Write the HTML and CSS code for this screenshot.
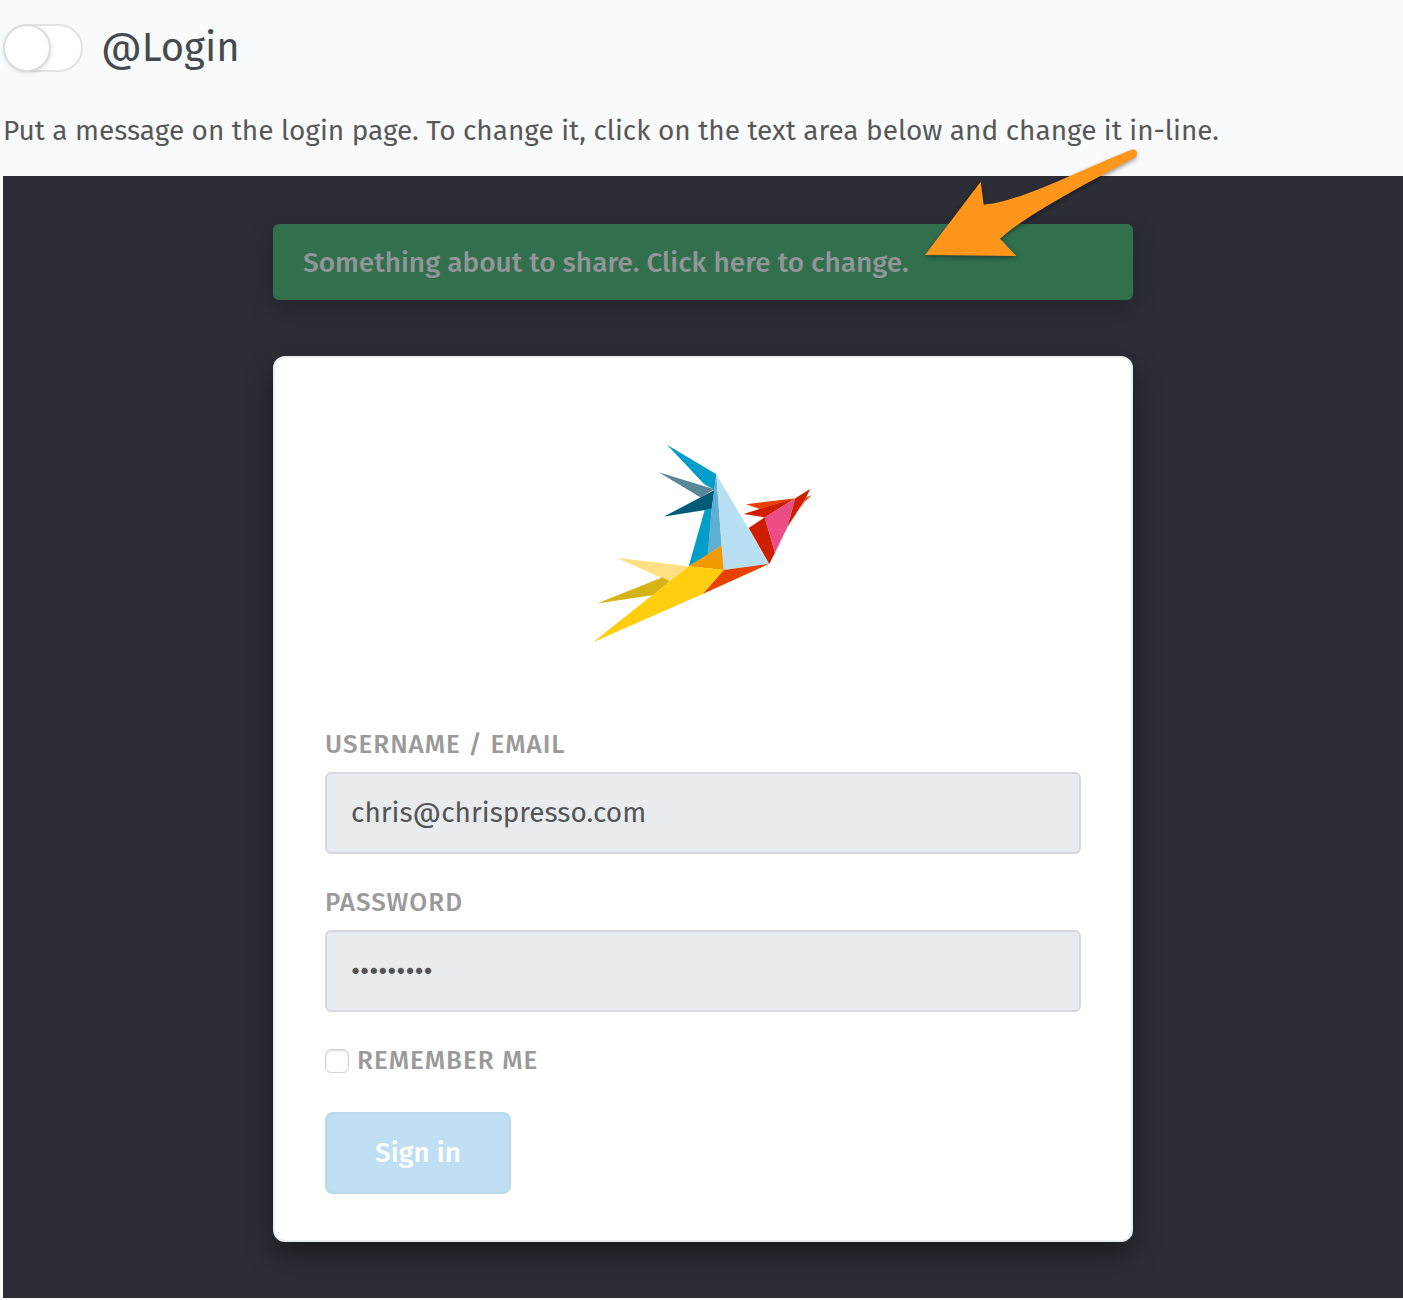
FILE: index.html
```html
<!DOCTYPE html>
<html lang="en">
<head>
<meta charset="utf-8">
<meta name="viewport" content="width=device-width, initial-scale=1">
<title>Login message</title>
<link rel="stylesheet" href="styles.css">
</head>
<body>
<main class="setting">
  <label class="setting-head">
    <input class="switch" type="checkbox" role="switch">
    <span class="setting-title">@Login</span>
  </label>
  <p class="setting-help">Put a message on the login page. To change it, click on the text area below and change it in-line.</p>

  <section class="preview" aria-label="Login page preview">
    <div class="banner">
      <span class="banner-text">Something about to share. Click here to change.</span>
      <svg class="arrow" viewBox="920 145 220 120" aria-hidden="true">
        <path fill="#ff951a" d="M925 255 L980.7 181.7 L983.7 204.7 C1020 202 1080 170 1132 149.5 Q1136.500 149 1137 153 Q1137 156 1134.500 157.500 C1090 182 1030 212 1000 238.700 L1016.300 256 Z"/>
      </svg>
    </div>

    <form class="card">
      <svg class="logo" viewBox="593 444 220 200" role="img" aria-label="Bird logo">
        <polygon fill="#009ec9" points="667,444.7 716.3,474.3 714.3,490 704,484"/>
        <polygon fill="#5a8796" points="658.7,472.3 714.3,489.3 700.7,497.5"/>
        <polygon fill="#005a78" points="664,516.5 700.7,497.3 714.5,490 711.7,509"/>
        <polygon fill="#009ec9" points="704.7,510 711.8,508.7 708,554.5 688.7,566.3"/>
        <polygon fill="#5eafd2" points="716.3,474.3 721.7,545.5 707.5,554.5 711.7,508.7 714.3,489.3"/>
        <polygon fill="#b8dff2" points="716.3,474.3 769.3,563.7 723.7,570 721.5,545.5"/>
        <polygon fill="#f39a00" points="721.6,545.5 688.7,566.3 723.7,570"/>
        <polygon fill="#e84000" points="723.7,570 769.5,563.7 702.7,594"/>
        <polygon fill="#ffe083" points="617.3,558 688.7,566.3 669.5,581.5"/>
        <polygon fill="#d5b416" points="597,603.4 662.5,577.3 669.5,581.3 653.7,595"/>
        <polygon fill="#ffce0f" points="688.7,566.3 723.7,570 702.7,594 593,642.3 653.7,594"/>
        <polygon fill="#e84000" points="746,504.3 795.3,498.3 760,508.9"/>
        <polygon fill="#cd1f00" points="743.7,514 760,508.7 795.3,498.3 764.7,517.4"/>
        <polygon fill="#cd1f00" points="748.7,528 764.7,517.3 775,552.7 769.3,564"/>
        <polygon fill="#ec4d86" points="764.7,517.3 795.3,498.3 787.3,527.3 775,552.7"/>
        <polygon fill="#cd1f00" points="795.3,498.3 810,489 806,498 787.3,527.3"/>
        <polygon fill="#e84000" points="806.5,497.5 812,495 805,501.500 798.3,511"/>
      </svg>

      <div class="field">
        <label class="field-label" for="user">Username / Email</label>
        <input class="field-input" id="user" type="text" value="chris@chrispresso.com">
      </div>
      <div class="field">
        <label class="field-label" for="pass">Password</label>
        <input class="field-input" id="pass" type="password" value="espresso1">
      </div>
      <label class="remember field-label">
        <input class="tick" type="checkbox">
        <span>Remember me</span>
      </label>
      <button class="submit" type="button">Sign in</button>
    </form>
  </section>
</main>
</body>
</html>
```
FILE: styles.css
```css
* {
  box-sizing: border-box;
}

body {
  margin: 0;
  background: #f9fafb;
  color: #585858;
  font-family: "Fira Sans", "Noto Sans", sans-serif;
  font-size: 28px;
  line-height: 42px;
}

.setting {
  padding: 24px 0 2px 3px;
}

.setting-head {
  display: flex;
  align-items: center;
  gap: 18px;
  height: 48px;
}

.switch {
  appearance: none;
  display: flex;
  width: 80px;
  height: 48px;
  margin: 0;
  border: 2px solid #e2e3e4;
  border-radius: 24px;
  background: #fff;
}

.switch::before {
  content: "";
  width: 44px;
  height: 44px;
  border-radius: 50%;
  background: #fff;
  box-shadow: 0 0 0 2px #dcdddd, 1px 2px 5px rgba(0, 0, 0, 0.2);
}

.setting-title {
  color: #444a4e;
  font-size: 40px;
}

.setting-help {
  margin: 38px 0 24px;
}

.preview {
  padding: 48px 24px 56px;
  background: #2d2d36;
}

.banner,
.card {
  max-width: 860px;
  margin: 0 auto;
}

.banner {
  position: relative;
  padding: 18px 30px 16px;
  border-radius: 6px;
  background: #316f4d;
  box-shadow: 0 8px 24px rgba(0, 0, 0, 0.25);
  color: #929699;
  font-weight: 500;
}

.arrow {
  position: absolute;
  top: -79px;
  right: -7px;
  width: 220px;
  height: 120px;
  filter: drop-shadow(0 2px 2px rgba(0, 0, 0, 0.4));
}

.card {
  margin-top: 56px;
  padding: 86px 50px 46px;
  border: 2px solid #e9edf0;
  border-radius: 12px;
  background: #fff;
  box-shadow: 0 12px 28px rgba(0, 0, 0, 0.45);
}

.logo {
  display: block;
  width: 220px;
  height: 200px;
  margin: 0 auto 80px;
}

.field {
  margin-bottom: 28px;
}

.field-label {
  display: block;
  color: #9a9a9a;
  font-size: 26px;
  font-weight: 500;
  letter-spacing: 1px;
  text-transform: uppercase;
}

.field-input {
  display: block;
  width: 100%;
  height: 82px;
  margin-top: 6px;
  padding: 0 24px 2px;
  border: 2px solid #d5d9de;
  border-radius: 6px;
  background: #e9ecef;
  color: #555;
  font: inherit;
}

.remember {
  display: flex;
  align-items: center;
  gap: 8px;
}

.tick {
  appearance: none;
  width: 24px;
  height: 24px;
  margin: 0;
  border: 1px solid #d2d2d2;
  border-radius: 6px;
  background: #fff;
  box-shadow: inset 0 1px 2px rgba(0, 0, 0, 0.15);
}

.submit {
  display: block;
  min-width: 186px;
  height: 82px;
  margin-top: 30px;
  padding: 0 46px;
  border: 2px solid #b9d9ed;
  border-radius: 8px;
  background: #c0dff2;
  color: #fff;
  font: inherit;
  font-weight: 500;
}
```
